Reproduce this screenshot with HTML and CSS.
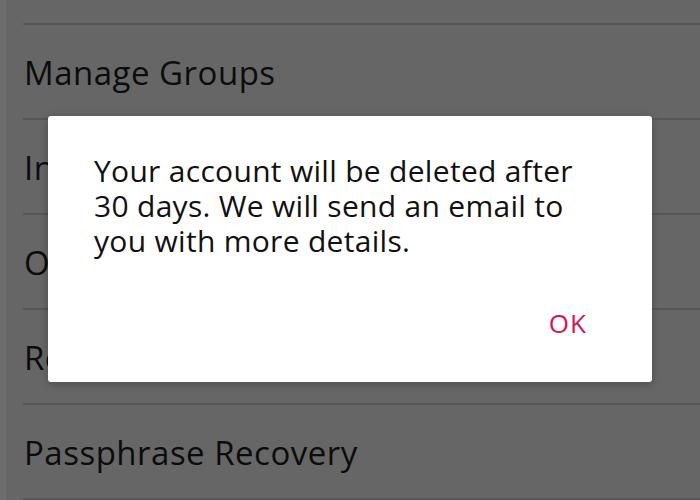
FILE: index.html
```html
<!DOCTYPE html>
<html lang="en">
<head>
    <meta charset="UTF-8">
    <meta name="viewport" content="width=device-width, initial-scale=1.0">
    <title>Account Settings</title>
    <link rel="stylesheet" href="styles.css">
</head>
<body>
    <div class="screen">
        <ul class="menu">
            <li class="menu-item">Manage Groups</li>
            <li class="menu-item">Invite Friends</li>
            <li class="menu-item">Other Settings</li>
            <li class="menu-item">Reset Account</li>
            <li class="menu-item">Passphrase Recovery</li>
            <li class="menu-item"></li>
        </ul>
        <div class="dialog">
            <p class="dialog-text">Your account will be deleted after 30 days. We will send an email to you with more details.</p>
            <div class="dialog-actions">
                <button class="dialog-btn">OK</button>
            </div>
        </div>
    </div>
</body>
</html>
```

FILE: styles.css
```css
body {
    margin: 0;
    font-family: "Open Sans", "Noto Sans", sans-serif;
    background-color: #666666;
    color: #0c0c0c;
}
.screen {
    height: 500px;
    overflow: hidden;
    border-left: 6px solid #6d6d6d;
}
.menu {
    list-style: none;
    margin: 0;
    padding: 23px 0 0 17px;
}
.menu-item {
    border-top: 2px solid #575757;
    height: 95px;
    padding-left: 1px;
    display: flex;
    align-items: center;
    font-size: 33px;
    letter-spacing: 0.5px;
    padding-top: 2px;
    box-sizing: border-box;
}
.dialog {
    position: absolute;
    left: 48px;
    top: 116px;
    width: 604px;
    height: 266px;
    box-sizing: border-box;
    background-color: #ffffff;
    border-radius: 3px;
    box-shadow: 0 2px 8px rgba(0, 0, 0, 0.25);
    padding: 37px 40px 0 46px;
    display: flex;
    flex-direction: column;
}
.dialog-text {
    margin: 0;
    font-size: 30px;
    letter-spacing: 0.3px;
    line-height: 35px;
    color: #111111;
}
.dialog-actions {
    display: flex;
    justify-content: flex-end;
    margin-top: 47px;
    padding-right: 25px;
}
.dialog-btn {
    border: none;
    background: none;
    padding: 0;
    font-family: inherit;
    font-size: 26px;
    letter-spacing: 1px;
    color: #d3145a;
}
```
